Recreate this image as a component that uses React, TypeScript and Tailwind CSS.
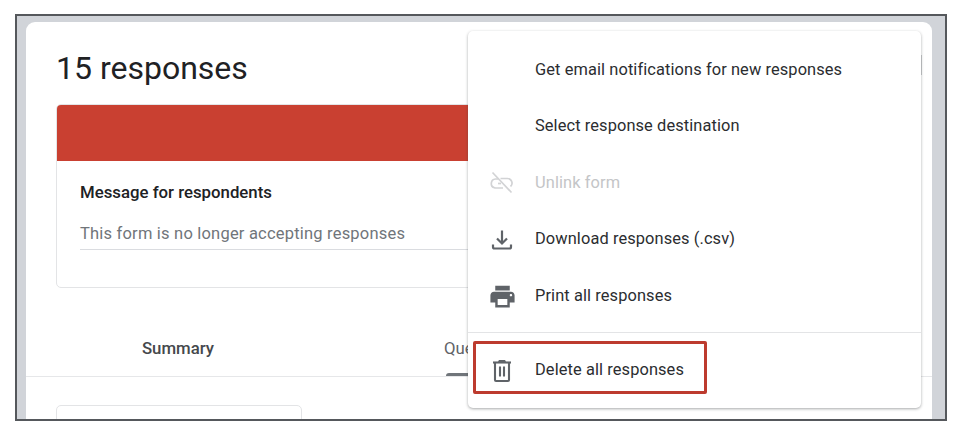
const font = { fontFamily: "Roboto, sans-serif" };

function UnlinkIcon() {
	return (
		<svg width="28" height="28" viewBox="0 0 28 28" fill="none" stroke="#d2d3d5" strokeWidth="1.7">
			<path d="M4.5 3.5l19 20" />
			<path d="M10 10H7.5a4.5 4.5 0 0 0-1 8.8c.4.1.7.2 1.2.2H15" />
			<path d="M12.5 9.5h7a4.6 4.6 0 0 1 3 8" />
			<path d="M10 14.5h3" />
		</svg>
	);
}

function DownloadIcon() {
	return (
		<svg width="24" height="24" viewBox="0 0 24 24" fill="none" stroke="#5f6368" strokeWidth="2.2">
			<path d="M12 2.5v12" />
			<path d="M7 10.5l5 5 5-5" />
			<path d="M3 16.5v2.5a1.5 1.5 0 0 0 1.5 1.5h15a1.5 1.5 0 0 0 1.5-1.5v-2.5" />
		</svg>
	);
}

function PrintIcon() {
	return (
		<svg width="29" height="29" viewBox="0 0 24 24" fill="#5f6368">
			<path d="M19 8H5c-1.66 0-3 1.34-3 3v6h4v4h12v-4h4v-6c0-1.66-1.34-3-3-3zm-3 11H8v-5h8v5zm3-7c-.55 0-1-.45-1-1s.45-1 1-1 1 .45 1 1-.45 1-1 1zm-1-9H6v4h12V3z" />
		</svg>
	);
}

function TrashIcon() {
	return (
		<svg width="24" height="24" viewBox="0 0 24 24" fill="none" stroke="#5f6368" strokeWidth="2.1">
			<path d="M3 3.5h18" />
			<path d="M9 3.5l.6-1.5h4.8l.6 1.5" />
			<path d="M5 3.5v17.5a1 1 0 0 0 1 1h12a1 1 0 0 0 1-1v-17.5" />
			<path d="M10 7.5v10" />
			<path d="M14 7.5v10" />
		</svg>
	);
}

const topItems = [
	{ label: "Get email notifications for new responses" },
	{ label: "Select response destination" },
	{ label: "Unlink form", icon: <UnlinkIcon />, disabled: true },
	{ label: "Download responses (.csv)", icon: <DownloadIcon /> },
	{ label: "Print all responses", icon: <PrintIcon /> },
];

function MenuRow({ label, icon, disabled }: { label: string; icon?: React.ReactNode; disabled?: boolean }) {
	return (
		<div className="flex h-[56.5px] items-center">
			<div className="flex w-[67px] justify-center pl-[1px]">{icon}</div>
			<span className={`text-[16.4px] tracking-[0.1px] ${disabled ? "text-[#c4c5c7]" : "text-[#2b2d30]"}`}>{label}</span>
		</div>
	);
}

export default function App() {
	return (
		<div className="h-[437px] w-[960px] overflow-hidden bg-white pl-[15px] pt-[14px]" style={font}>
			<div className="relative h-[407px] w-[932px] overflow-hidden border-2 border-[#55585c] bg-[#d1d4d9] pl-[9px] pt-[6px]">
				{/* main card */}
				<div className="h-[500px] w-[906px] rounded-t-[9px] bg-white pt-[24px]">
					<div className="flex items-center justify-between pl-[30px] pr-[10px]">
						<h1 className="text-[32px] leading-[44px] text-[#202124]">15 responses</h1>
						<div className="mt-[-6px] h-[20px] w-[2px] bg-[#c9cacc]"></div>
					</div>
					{/* not accepting box */}
					<div className="ml-[30px] mt-[14px] w-[846px] overflow-hidden rounded-[5px] border border-[#e3e4e6]">
						<div className="h-[56px] bg-[#c94031]"></div>
						<div className="h-[126px] px-[23px] pt-[22px]">
							<div className="text-[16.8px] font-medium leading-[18px] text-[#202124]">Message for respondents</div>
							<div className="mt-[23px] border-b border-[#dadce0] pb-[5px] text-[16.5px] leading-[20px] tracking-[0.2px] text-[#70757a]">
								This form is no longer accepting responses
							</div>
						</div>
					</div>
					{/* tabs */}
					<div className="flex h-[89px] border-b border-[#e6e7e9]">
						<div className="flex w-[304px] justify-center pt-[50px] text-[16.8px] font-medium leading-[20px] text-[#45484c]">
							Summary
						</div>
						<div className="relative w-[304px] pl-[114px] pt-[50px] text-[16.8px] leading-[20px] text-[#5f6368]">
							Question
							<div className="absolute bottom-0 left-[116px] h-[3px] w-[90px] rounded-t bg-[#70757a]"></div>
						</div>
					</div>
					<div className="ml-[30px] mt-[28px] h-[40px] w-[246px] rounded-[5px] border border-[#e3e4e6]"></div>
				</div>

				{/* dropdown menu */}
				<div className="absolute left-[451px] top-[15px] h-[377px] w-[453px] rounded-[5px] bg-white pt-[11px] shadow-[0_1px_3px_rgba(60,64,67,0.45)]">
					{topItems.map((item) => (
						<MenuRow key={item.label} label={item.label} icon={item.icon} disabled={item.disabled} />
					))}
					<div className="mt-[7px] h-[37px] border-t border-[#e3e4e6] pt-[10px]">
						<MenuRow label="Delete all responses" icon={<TrashIcon />} />
					</div>
				</div>

				{/* highlight */}
				<div className="absolute left-[456px] top-[325px] h-[53px] w-[234px] rounded-[2px] border-[3px] border-[#bd3b2e]"></div>
			</div>
		</div>
	);
}
